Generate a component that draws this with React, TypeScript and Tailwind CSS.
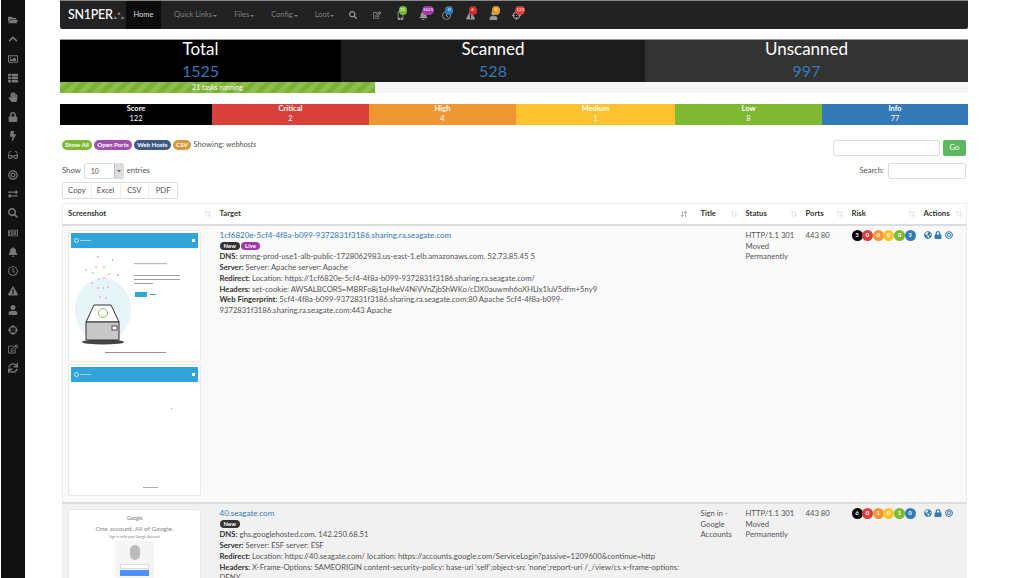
import {
  FaBell, FaBolt, FaBullseye, FaChevronUp, FaCrosshairs, FaExchangeAlt, FaExclamationTriangle, FaFolderOpen,
  FaGlasses, FaGlobeAmericas, FaHandPaper, FaLock, FaMobileAlt, FaRegClock, FaRegEdit, FaRegImage, FaRegNewspaper,
  FaSearch, FaSync, FaThList, FaUser,
} from "react-icons/fa";
import { ArrowDownUp, ArrowUpDown } from "lucide-react";

const font = "font-['Lato','Liberation_Sans',sans-serif]";

const sideIcons = [
  FaFolderOpen, FaChevronUp, FaRegImage, FaThList, FaHandPaper, FaLock, FaBolt, FaGlasses, FaBullseye,
  FaExchangeAlt, FaSearch, FaRegNewspaper, FaBell, FaRegClock, FaExclamationTriangle, FaUser, FaCrosshairs, FaRegEdit, FaSync,
];

const navBadges = [
  { icon: FaMobileAlt, text: "21", color: "bg-[#7cb82f]" },
  { icon: FaBell, text: "1625", color: "bg-[#a03aa8]" },
  { icon: FaRegClock, text: "0", color: "bg-[#337ab7]" },
  { icon: FaExclamationTriangle, text: "6", color: "bg-[#c9302c]" },
  { icon: FaUser, text: "0", color: "bg-[#e09a28]" },
  { icon: FaCrosshairs, text: "122", color: "bg-[#d9403b]" },
];

const riskBar = [
  { label: "Score", value: "122", cls: "w-[152px] bg-black" },
  { label: "Critical", value: "2", cls: "w-[157px] bg-[#d9403b]" },
  { label: "High", value: "4", cls: "w-[147px] bg-[#ef9733]" },
  { label: "Medium", value: "1", cls: "w-[159px] bg-[#fdc22e]" },
  { label: "Low", value: "8", cls: "w-[147px] bg-[#7fb832]" },
  { label: "Info", value: "77", cls: "flex-1 bg-[#337ab7]" },
];

const riskColors = ["bg-black", "bg-[#d9403b]", "bg-[#ef9733]", "bg-[#fdc22e]", "bg-[#7fb832]", "bg-[#337ab7]"];

const confetti = [
  [27, 9, "#f7a8c0"], [42, 12, "#f7a8c0"], [15, 22, "#c9c9c9"], [25, 19, "#f7b8a0"], [33, 19, "#b8d88c"], [22, 25, "#a8d4e0"],
  [47, 27, "#f7a8c0"], [38, 26, "#b8d88c"], [21, 35, "#f7a8c0"], [28, 31, "#a8d4e0"], [33, 30, "#f7a8c0"], [27, 40, "#f7b8a0"],
  [32, 40, "#a8d4e0"], [37, 39, "#f7a8c0"], [29, 49, "#c9c9c9"], [35, 50, "#f7b8a0"],
];

function NavItem({ label }: { label: string }) {
  return (
    <span className="flex items-center gap-[1px] text-[#808080]">
      {label}
      <span className="mt-[1px] border-x-[2px] border-t-[2px] border-x-transparent border-t-[#808080]" />
    </span>
  );
}

function Navbar() {
  return (
    <div className="flex h-[29px] items-center rounded-b-[2px] border-t border-t-[#888] bg-[#222] text-[7.5px]">
      <div className="flex w-[66px] items-center pl-[8px]">
        <span className="text-[12.5px] font-medium tracking-[-0.3px] text-white">SN1PER</span>
        <svg viewBox="0 0 20 14" className="ml-[1px] h-[9px] w-[12px]" fill="none" stroke="#aaa" strokeWidth="1.2">
          <path d="M10 2 12 5H8ZM4 9 6 12H2ZM16 9 18 12H14Z" />
        </svg>
      </div>
      <div className="flex h-full w-[35px] items-center justify-center bg-[#0c0c0c] text-[#ddd]">Home</div>
      <div className="ml-[13px] flex w-[165px] gap-[17px]">
        <NavItem label="Quick Links" />
        <NavItem label="Files" />
        <NavItem label="Config" />
        <NavItem label="Loot" />
      </div>
      <FaSearch className="ml-[10px] size-[8px] text-[#999]" />
      <FaRegEdit className="ml-[15.5px] size-[8px] text-[#999]" />
      <div className="ml-[15px] flex gap-[14.4px]">
        {navBadges.map((b) => (
          <span key={b.text + b.color} className="relative flex size-[9px]">
            <b.icon className="size-[9px] text-[#999]" />
            <span className={`absolute -top-[5px] left-[3px] flex h-[9px] min-w-[8px] items-center justify-center rounded-full px-[1px] text-[4.5px] text-white ${b.color}`}>
              {b.text}
            </span>
          </span>
        ))}
      </div>
    </div>
  );
}

function Stat({ title, value, cls }: { title: string; value: string; cls: string }) {
  return (
    <div className={`flex flex-col items-center ${cls}`}>
      <div className="-mt-[1px] text-[17px] leading-[19px] text-white">{title}</div>
      <div className="mt-[4px] text-[16px] leading-[18px] text-[#337ab7]">{value}</div>
    </div>
  );
}

function Pill({ label, cls }: { label: string; cls: string }) {
  return <span className={`rounded-full px-[3px] py-[1px] text-[6.2px] font-bold leading-[7.5px] text-white ${cls}`}>{label}</span>;
}

function RiskDots({ values }: { values: string[] }) {
  return (
    <div className="flex">
      {values.map((v, i) => (
        <span key={i} className={`-mr-[0.4px] flex size-[11px] items-center justify-center rounded-full text-[6px] font-bold text-white ${riskColors[i]}`}>
          {v}
        </span>
      ))}
    </div>
  );
}

function Actions() {
  return (
    <div className="flex gap-[2.5px] pt-[1px] text-[#337ab7]">
      <FaGlobeAmericas className="size-[8px]" />
      <FaLock className="size-[8px]" />
      <FaBullseye className="size-[8px]" />
    </div>
  );
}

function SeagateBar() {
  return (
    <div className="flex h-[15px] items-center justify-between bg-[#31a5d9] px-[3px]">
      <span className="flex items-center gap-[1px]">
        <span className="size-[5px] rounded-full border border-white/70" />
        <span className="h-[1px] w-[11px] bg-white/50" />
      </span>
      <span className="size-[3px] bg-white" />
    </div>
  );
}

function Card({ children }: { children: React.ReactNode }) {
  return <div className="h-[132px] w-[133px] rounded-[2px] border border-[#e8e8e8] bg-white px-[2px] pt-[2px]">{children}</div>;
}

function ThumbOne() {
  return (
    <Card>
      <SeagateBar />
      <svg viewBox="0 0 127 113" className="h-[113px] w-[127px]">
        <ellipse cx="32" cy="62" rx="28" ry="32" fill="#e8f5f8" />
        {confetti.map(([x, y, c], i) => (
          <circle key={i} cx={x as number} cy={y as number} r="1" fill={c as string} />
        ))}
        <ellipse cx="32" cy="94" rx="21" ry="2.5" fill="#444" />
        <path d="M15 74 23 57H40L48 74Z" fill="#fff" stroke="#333" strokeWidth="1" />
        <rect x="15" y="74" width="33" height="18" fill="#c8c8c8" stroke="#333" strokeWidth="1" />
        <circle cx="32" cy="65" r="4.5" fill="#fff" stroke="#7fc241" />
        <rect x="41" y="78" width="5" height="4" fill="#fff" stroke="#333" strokeWidth="0.8" />
        <rect x="63" y="15" width="33" height="1.2" fill="#bbb" />
        <rect x="63" y="27" width="46" height="0.8" fill="#888" />
        <rect x="63" y="31" width="46" height="0.8" fill="#888" />
        <rect x="63" y="35" width="19" height="0.8" fill="#888" />
        <rect x="64" y="44" width="12" height="5" fill="#31a5d9" />
        <rect x="79" y="46" width="6" height="1" fill="#31a5d9" />
        <rect x="34" y="104" width="61" height="0.8" fill="#777" />
      </svg>
    </Card>
  );
}

function ThumbTwo() {
  return (
    <Card>
      <SeagateBar />
      <svg viewBox="0 0 127 113" className="h-[113px] w-[127px]">
        <rect x="100" y="26" width="1" height="1" fill="#999" />
        <rect x="72" y="105" width="15" height="0.8" fill="#999" />
      </svg>
    </Card>
  );
}

function ThumbGoogle() {
  return (
    <Card>
      <div className="flex flex-col items-center pt-[3px]">
        <div className="text-[5px] leading-[7px] text-[#777]">Google</div>
        <div className="mt-[3px] text-[6.5px] leading-[8px] text-[#888]">One account. All of Google.</div>
        <div className="mt-[1px] text-[3.5px] leading-[6px] text-[#888]">Sign in with your Google Account</div>
        <div className="mt-[1px] flex h-[60px] w-[39px] flex-col items-center bg-[#f5f5f5] pt-[4px]">
          <div className="h-[15px] w-[10px] rounded-full bg-[#bbb]" />
          <div className="mt-[4px] h-[5px] w-[29px] border border-[#ddd] bg-white" />
          <div className="mt-[1px] h-[6px] w-[29px] bg-[#4d90fe]" />
        </div>
      </div>
    </Card>
  );
}

function Th({ label, cls, active }: { label: string; cls: string; active?: boolean }) {
  const Icon = active ? ArrowDownUp : ArrowUpDown;
  return (
    <th className={`relative border-b-2 border-[#ddd] pl-[5px] text-left align-middle text-[7.7px] font-bold text-[#333] ${cls}`}>
      {label}
      <Icon strokeWidth={2.5} className={`absolute right-[3px] top-[6px] size-[8px] ${active ? "right-[8px] text-[#999]" : "text-[#ddd]"}`} />
    </th>
  );
}

function Line({ name, children }: { name: string; children: React.ReactNode }) {
  return (
    <div>
      <b className="font-bold text-[#333]">{name}:</b> {children}
    </div>
  );
}

function NewBadge({ label, cls }: { label: string; cls: string }) {
  return <span className={`mr-[1px] inline-block rounded-full px-[4px] text-[6px] font-bold leading-[8px] text-white ${cls}`}>{label}</span>;
}

export default function App() {
  return (
    <div className={`flex h-[578px] w-[1024px] overflow-hidden bg-white text-[#555] ${font}`}>
      <div className="ml-[1px] flex w-[24px] shrink-0 flex-col items-center gap-[9.35px] bg-[#111] pt-[15px]">
        {sideIcons.map((Icon, i) => (
          <Icon key={i} className="size-[10px] text-[#777]" />
        ))}
      </div>

      <div className="w-[943px] pl-[35px]">
        <Navbar />

        <div className="mt-[10px] flex h-[43px] border-t border-t-[#999]">
          <Stat title="Total" value="1525" cls="w-[281px] bg-black" />
          <Stat title="Scanned" value="528" cls="w-[304px] bg-[#1c1c1c]" />
          <Stat title="Unscanned" value="997" cls="flex-1 bg-[#333]" />
        </div>

        <div className="flex h-[11px] bg-[#f5f5f5]">
          <div className="flex w-[315px] items-center justify-center bg-[#7cb233] bg-[repeating-linear-gradient(135deg,#8dbf4c_0,#8dbf4c_5px,#7cb233_5px,#7cb233_10px)] text-[7px] text-white">
            21 tasks running
          </div>
        </div>

        <div className="mt-[11px] flex h-[21px] border-t border-t-[#cde]">
          {riskBar.map((r) => (
            <div key={r.label} className={`-mt-[1px] flex flex-col items-center text-[7.5px] leading-[10px] text-white ${r.cls}`}>
              <span className="font-bold">{r.label}</span>
              <span>{r.value}</span>
            </div>
          ))}
        </div>

        <div className="mt-[15px] flex h-[17px] justify-between px-[2px]">
          <div className="flex h-[10px] items-center gap-[2.5px] text-[7.7px]">
            <Pill label="Show All" cls="bg-[#7fb832]" />
            <Pill label="Open Ports" cls="bg-[#a04fb0]" />
            <Pill label="Web Hosts" cls="bg-[#3d5a85]" />
            <Pill label="CSV" cls="bg-[#d39a3f]" />
            <span>Showing: <i>webhosts</i></span>
          </div>
          <div className="flex gap-[3px]">
            <div className="h-[16px] w-[107px] rounded-[2px] border border-[#ddd] bg-white" />
            <div className="flex h-[16px] w-[23px] items-center justify-center rounded-[2px] bg-[#5cb85c] text-[7.7px] text-white">Go</div>
          </div>
        </div>

        <div className="mt-[6px] flex h-[16px] items-center justify-between px-[2px] text-[7.7px]">
          <div className="flex items-center gap-[3px]">
            Show
            <div className="flex h-[16px] w-[40px] items-center justify-between rounded-[2px] border border-[#ddd] pl-[6px] text-[7px]">
              10
              <span className="flex h-full w-[9px] items-center justify-center border-l border-[#bbb] bg-[#ddd]">
                <span className="border-x-[2px] border-t-[2px] border-x-transparent border-t-[#555]" />
              </span>
            </div>
            entries
          </div>
          <div className="flex items-center gap-[4px]">
            Search:
            <div className="h-[16px] w-[78px] rounded-[2px] border border-[#ddd]" />
          </div>
        </div>

        <div className="ml-[2px] mt-[3px] flex h-[17px] w-[116px] rounded-[2px] border border-[#ddd] text-[7.7px]">
          {["Copy", "Excel", "CSV", "PDF"].map((b, i) => (
            <span key={b} className={`flex flex-1 items-center justify-center ${i > 0 ? "border-l border-[#eee]" : ""}`}>{b}</span>
          ))}
        </div>

        <table className="ml-[2px] mt-[4px] w-[904px] table-fixed border-collapse border-x border-t border-[#eee] text-[7.7px] leading-[10.7px]">
          <thead>
            <tr className="h-[21px]">
              <Th label="Screenshot" cls="w-[152px]" />
              <Th label="Target" cls="w-[481px]" active />
              <Th label="Title" cls="w-[45px]" />
              <Th label="Status" cls="w-[60px]" />
              <Th label="Ports" cls="w-[46px]" />
              <Th label="Risk" cls="w-[72px]" />
              <Th label="Actions" cls="w-[48px]" />
            </tr>
          </thead>
          <tbody>
            <tr className="h-[278px] border-b-2 border-[#ddd] bg-[#f9f9f9] align-top">
              <td className="pl-[5px] pt-[4px]">
                <div className="flex flex-col gap-[2.5px]">
                  <ThumbOne />
                  <ThumbTwo />
                </div>
              </td>
              <td className="px-[5px] pt-[4.5px]">
                <div className="text-[8px] text-[#337ab7]">1cf6820e-5cf4-4f8a-b099-9372831f3186.sharing.ra.seagate.com</div>
                <div className="flex h-[10.7px] items-center"><NewBadge label="New" cls="bg-[#333]" /><NewBadge label="Live" cls="bg-[#a03aa8]" /></div>
                <Line name="DNS">srmng-prod-use1-alb-public-1728062983.us-east-1.elb.amazonaws.com. 52.73.85.45 5</Line>
                <Line name="Server">Server: Apache server: Apache</Line>
                <Line name="Redirect">Location: https://1cf6820e-5cf4-4f8a-b099-9372831f3186.sharing.ra.seagate.com/</Line>
                <Line name="Headers">set-cookie: AWSALBCORS=MBRFo8j1qHkeV4NiVVnZjbShWKo/cDX0auwmh6oXHLlx1luV5dfm+5ny9</Line>
                <Line name="Web Fingerprint">5cf4-4f8a-b099-9372831f3186.sharing.ra.seagate.com:80 Apache 5cf4-4f8a-b099-9372831f3186.sharing.ra.seagate.com:443 Apache</Line>
              </td>
              <td className="pl-[5px] pt-[4.5px]" />
              <td className="pl-[5px] pt-[4.5px]">HTTP/1.1 301 Moved Permanently</td>
              <td className="pl-[5px] pt-[4.5px]">443 80</td>
              <td className="pl-[5px] pt-[4.5px]"><RiskDots values={["3", "0", "0", "0", "0", "3"]} /></td>
              <td className="pl-[5px] pt-[4.5px]"><Actions /></td>
            </tr>
            <tr className="bg-[#f1f1f1] align-top">
              <td className="pl-[5px] pt-[5px]"><ThumbGoogle /></td>
              <td className="px-[5px] pt-[4.5px]">
                <div className="text-[8px] text-[#337ab7]">40.seagate.com</div>
                <div className="flex h-[10.7px] items-center"><NewBadge label="New" cls="bg-[#333]" /></div>
                <Line name="DNS">ghs.googlehosted.com. 142.250.68.51</Line>
                <Line name="Server">Server: ESF server: ESF</Line>
                <Line name="Redirect">Location: https://40.seagate.com/ location: https://accounts.google.com/ServiceLogin?passive=1209600&amp;continue=http</Line>
                <Line name="Headers">X-Frame-Options: SAMEORIGIN content-security-policy: base-uri 'self';object-src 'none';report-uri /_/view/cs x-frame-options: DENY</Line>
              </td>
              <td className="pl-[5px] pt-[4.5px]">Sign in - Google Accounts</td>
              <td className="pl-[5px] pt-[4.5px]">HTTP/1.1 301 Moved Permanently</td>
              <td className="pl-[5px] pt-[4.5px]">443 80</td>
              <td className="pl-[5px] pt-[4.5px]"><RiskDots values={["6", "0", "1", "0", "1", "0"]} /></td>
              <td className="pl-[5px] pt-[4.5px]"><Actions /></td>
            </tr>
          </tbody>
        </table>
      </div>
    </div>
  );
}
